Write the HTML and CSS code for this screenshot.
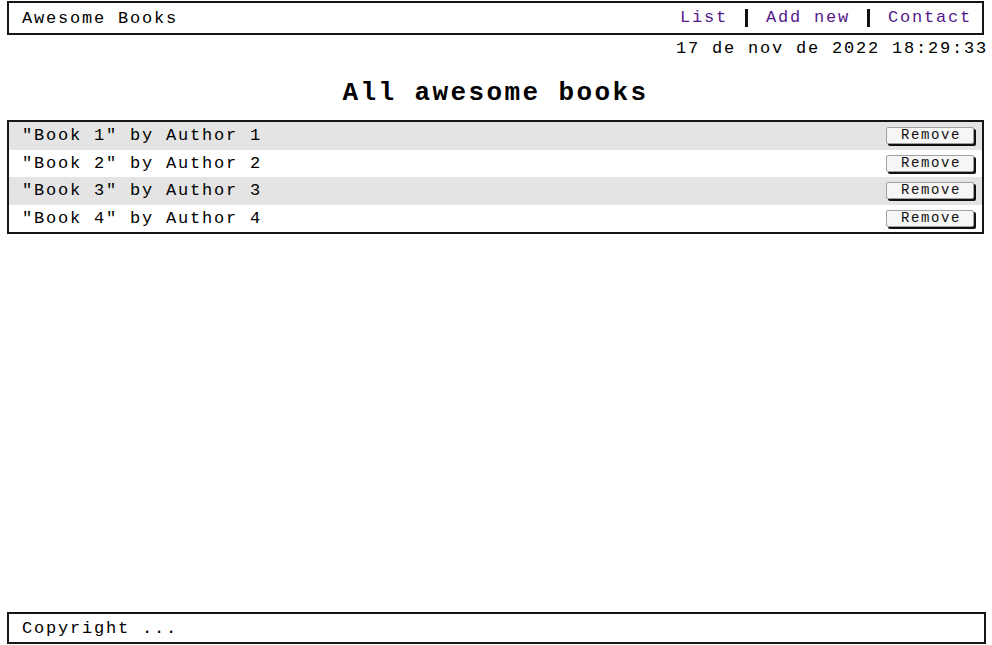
FILE: index.html
```html
<!DOCTYPE html>
<html lang="en">
<head>
<meta charset="utf-8">
<title>Awesome Books</title>
<link rel="stylesheet" href="styles.css">
</head>
<body>
<div class="page">
  <header class="topbar">
    <span class="brand">Awesome Books</span>
    <nav class="nav">
      <a class="nav-link" href="#list">List</a>
      <a class="nav-link sep" href="#add">Add new</a>
      <a class="nav-link sep" href="#contact">Contact</a>
    </nav>
  </header>
  <div class="date">17 de nov de 2022 18:29:33</div>
  <main class="content">
    <h1 class="title">All awesome books</h1>
    <ul class="books">
      <li class="book"><span class="book-text">"Book 1" by Author 1</span><button class="remove">Remove</button></li>
      <li class="book"><span class="book-text">"Book 2" by Author 2</span><button class="remove">Remove</button></li>
      <li class="book"><span class="book-text">"Book 3" by Author 3</span><button class="remove">Remove</button></li>
      <li class="book"><span class="book-text">"Book 4" by Author 4</span><button class="remove">Remove</button></li>
    </ul>
  </main>
  <footer class="footer">Copyright ...</footer>
</div>
</body>
</html>
```
FILE: styles.css
```css
html, body {
  margin: 0;
  padding: 0;
  background: #fff;
}
body {
  font-family: "Liberation Mono", "Courier New", monospace;
  font-size: 17px;
  letter-spacing: 1.8px;
  color: #000;
}
.page {
  min-height: 645px;
  box-sizing: border-box;
  padding: 1px 8px 1px 7px;
  display: flex;
  flex-direction: column;
}
.topbar {
  display: flex;
  justify-content: space-between;
  align-items: center;
  height: 34px;
  box-sizing: border-box;
  border: 2px solid #161616;
  padding: 0 10px 0 13px;
}
.nav {
  display: flex;
  align-items: center;
}
.nav-link {
  color: #551a8b;
  text-decoration: none;
  padding: 0 17px 0 18px;
  line-height: 18px;
}
.nav-link:first-child {
  padding-left: 0;
}
.nav-link:last-child {
  padding-right: 0;
}
.nav-link.sep {
  border-left: 3px solid #111;
}
.date {
  text-align: right;
  margin-right: -4px;
  margin-top: 4px;
  line-height: 20px;
}
.content {
  display: flex;
  flex-direction: column;
}
.title {
  margin: 20px 0 0;
  text-align: center;
  font-size: 26px;
  letter-spacing: 2.4px;
  font-weight: bold;
  line-height: 28px;
}
.books {
  list-style: none;
  margin: 13px 0 0;
  padding: 0;
  border: 2px solid #161616;
}
.book {
  display: flex;
  justify-content: space-between;
  align-items: center;
  height: 27.5px;
  padding: 0 8px 0 13px;
}
.book:nth-child(odd) {
  background: #e4e4e4;
}
.remove {
  font-family: "Liberation Mono", "Courier New", monospace;
  font-size: 14px;
  letter-spacing: 1.6px;
  width: 88px;
  height: 17px;
  padding: 0 0 0 2px;
  background: #f6f6f6;
  border: 1px solid #a0a0a0;
  border-radius: 2px;
  box-shadow: 2px 2px 0 #111;
  color: #111;
  line-height: 15px;
}
.footer {
  margin-top: auto;
  height: 32px;
  box-sizing: border-box;
  border: 2px solid #161616;
  margin-right: -2px;
  padding: 0 13px;
  display: flex;
  align-items: center;
}
```
